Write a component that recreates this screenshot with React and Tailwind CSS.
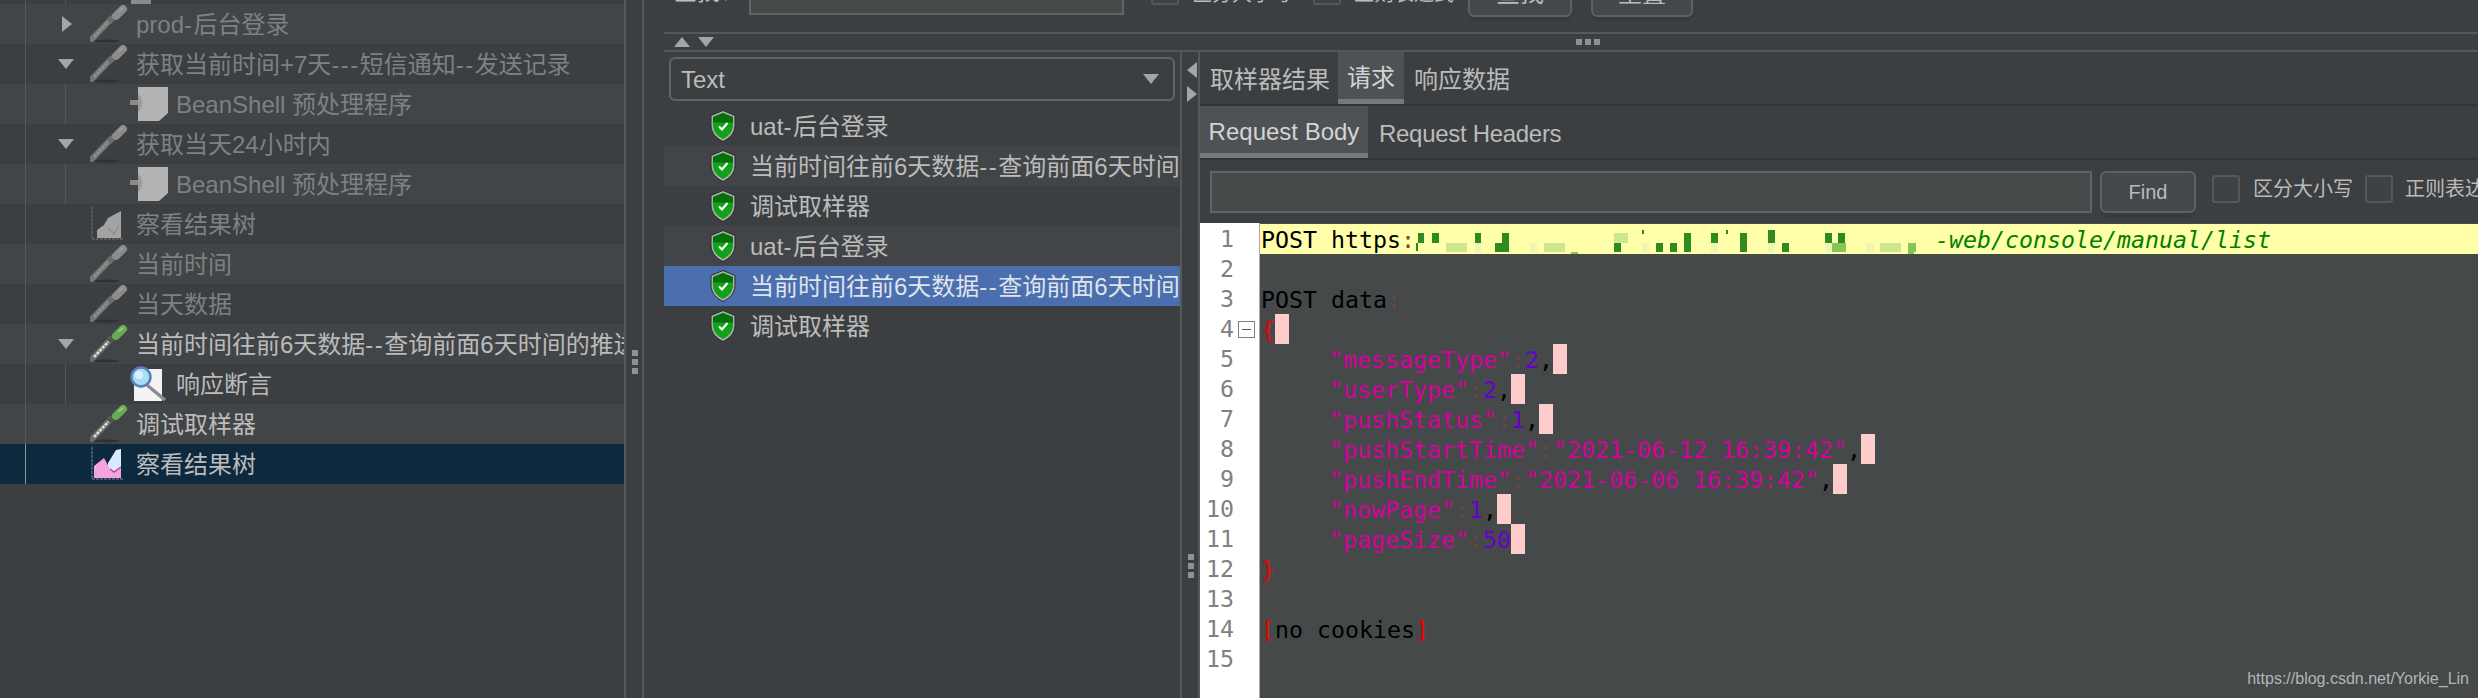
import React from "react";

// Tree rows of the JMeter test plan, top to bottom
const treeRows = [
  { text: "prod-后台登录", icon: "pipette", arrow: "right", light: true },
  { text: "获取当前时间+7天---短信通知--发送记录", icon: "pipette", arrow: "down" },
  { text: "BeanShell 预处理程序", icon: "bean", child: true, light: true },
  { text: "获取当天24小时内", icon: "pipette", arrow: "down" },
  { text: "BeanShell 预处理程序", icon: "bean", child: true, light: true },
  { text: "察看结果树", icon: "chart" },
  { text: "当前时间", icon: "pipette", light: true },
  { text: "当天数据", icon: "pipette" },
  { text: "当前时间往前6天数据--查询前面6天时间的推送记录", icon: "pipette", arrow: "down", light: true, on: true },
  { text: "响应断言", icon: "lens", child: true, on: true },
  { text: "调试取样器", icon: "pipette", light: true, on: true },
  { text: "察看结果树", icon: "chart", on: true, selected: true },
];

const results = [
  { text: "uat-后台登录" },
  { text: "当前时间往前6天数据--查询前面6天时间的推送记录", light: true },
  { text: "调试取样器" },
  { text: "uat-后台登录", light: true },
  { text: "当前时间往前6天数据--查询前面6天时间的推送记录", selected: true },
  { text: "调试取样器" },
];

// Censored part of the url, mosaic blocks: x, y, w, h, colour
const D = "#2f8a22";
const M = "#86c455";
const L = "#cfe690";
const P = "#eef5b4";
const mosaic = [
  [3, 9, 6, 10, D], [1, 19, 2, 8, D], [17, 9, 7, 10, D], [31, 19, 21, 9, L], [60, 9, 6, 10, D], [60, 19, 6, 9, P],
  [80, 19, 14, 9, D], [87, 9, 7, 10, D], [115, 19, 7, 9, P], [129, 19, 21, 9, L], [156, 28, 7, 2, M],
  [199, 9, 14, 10, L], [199, 19, 7, 9, D], [227, 6, 2, 4, D], [227, 19, 7, 9, P], [241, 19, 7, 9, D],
  [255, 19, 7, 9, D], [269, 9, 7, 19, D], [296, 9, 7, 10, D], [296, 19, 7, 9, P], [311, 6, 2, 4, D],
  [325, 9, 7, 19, D], [353, 6, 7, 13, D], [353, 19, 7, 9, P], [367, 19, 7, 9, D], [410, 9, 7, 10, D],
  [423, 9, 7, 10, D], [417, 19, 14, 9, M], [410, 19, 7, 9, P], [451, 19, 8, 9, P], [465, 19, 21, 9, L],
  [493, 19, 8, 9, M], [493, 28, 6, 2, M],
];

// Hyphens run a little wider than the Latin font gives them
const Label = ({ text }) =>
  text.split(/(-+)/).map((part, i) =>
    part.startsWith("-") ? (
      <span key={i} className="tracking-[1.5px]">{part}</span>
    ) : (
      <span key={i}>{part}</span>
    )
  );

const Pipette = ({ on }) => (
  <svg width="38" height="38" viewBox="0 0 38 38">
    <ellipse cx="16" cy="36" rx="13" ry="1.5" fill="#2f3133" />
    <path d="M2 34 L21 14" stroke={on ? "#6d6d6d" : "#767676"} strokeWidth="6" strokeLinecap="round" />
    <path d="M4 32 L20 15" stroke={on ? "#e4e4e4" : "#929292"} strokeWidth="2.5" strokeDasharray="3 1" />
    <path d="M19 17 L26 10" stroke={on ? "#4b5a46" : "#6b6b6b"} strokeWidth="6" />
    <path d="M26 11 L33 4" stroke={on ? "#6aaa55" : "#8b8b8b"} strokeWidth="8" strokeLinecap="round" />
    <path d="M29 6 L33 3" stroke={on ? "#93cc7d" : "#9b9b9b"} strokeWidth="2" strokeLinecap="round" />
  </svg>
);

const BeanIcon = () => (
  <svg width="40" height="36" viewBox="0 0 40 36">
    <path d="M8 1 H38 V27 L29 35 H8 Z" fill="#b4b4b4" />
    <path d="M0 14 H9 V19 H0 Z" fill="#8a8a8a" />
    <path d="M8 8 C14 12 14 22 8 26 Z" fill="#9c9c9c" />
  </svg>
);

const ChartIcon = ({ on }) => (
  <svg width="36" height="36" viewBox="0 0 36 36">
    <path d="M2 1 V33 H34" stroke={on ? "#5c6a78" : "#5f6163"} strokeWidth="1.5" fill="none" strokeDasharray="3 1" />
    {on ? (
      <>
        <path d="M18 17 L26 4 L31 3 V26 H18 Z" fill="#dce8fb" />
        <path d="M4 32 V20 L14 12 L20 23 L24 26 L31 21 V32 Z" fill="#f3a4e0" />
        <path d="M20 23 L24 26 L31 21" stroke="#c0409a" strokeWidth="1.5" fill="none" />
      </>
    ) : (
      <>
        <path d="M7 32 V24 L14 19 L18 12 L31 5 V32 Z" fill="#a3a3a3" />
        <path d="M18 22 L24 28 L29 20" stroke="#8e8e8e" strokeWidth="1.5" fill="none" />
      </>
    )}
  </svg>
);

const LensIcon = () => (
  <svg width="38" height="36" viewBox="0 0 38 36">
    <path d="M4 3 H32 V35 H4 Z" fill="#f3f3f3" />
    <path d="M17 19 L35 34" stroke="#8b8b8b" strokeWidth="3.5" />
    <circle cx="11" cy="11" r="9.5" fill="#a9dcf5" stroke="#5b7fb5" strokeWidth="2.5" />
    <circle cx="9" cy="9" r="4" fill="#d8f2fc" />
  </svg>
);

const Shield = () => (
  <svg width="28" height="32" viewBox="-1 -0.5 28 32">
    <path d="M13 0 L25 5 V15 C25 23 19 28 13 31 C7 28 1 23 1 15 V5 Z" fill="#aab0aa" stroke="#26282a" strokeWidth="1" />
    <path d="M13 2.5 L23 6.5 V15 C23 21.5 18 26 13 28.5 C8 26 3 21.5 3 15 V6.5 Z" fill="#12a018" />
    <path d="M13 2.5 L23 6.5 V12 H3 V6.5 Z" fill="#04700a" />
    <path d="M9 16 L12 19 L17.5 12.5" stroke="#ffffff" strokeWidth="2.2" fill="none" />
  </svg>
);

const Tri = ({ dir, className }) => {
  const points = {
    down: "0,0 16,0 8,10",
    up: "0,10 16,10 8,0",
    right: "0,0 10,8 0,16",
    left: "10,0 10,16 0,8",
  }[dir];
  const size = dir === "down" || dir === "up" ? { width: 16, height: 10 } : { width: 10, height: 16 };
  return (
    <svg {...size} className={className}>
      <polygon points={points} fill="#a3a5a6" />
    </svg>
  );
};

const TreeRow = ({ row }) => {
  const rowBg = row.selected ? "bg-[#0d293e]" : row.light ? "bg-[#424547]" : "bg-[#3c3f41]";
  const textColor = row.on ? "text-[#bbbbbb]" : "text-[#7e8082]";
  return (
    <div className={`flex h-10 items-center overflow-hidden whitespace-nowrap ${rowBg}`}>
      <span className={`ml-[25px] w-[1px] shrink-0 self-stretch ${row.selected ? "bg-[#8b9298]" : "bg-[#555759]"}`} />
      <span className="flex w-[64px] shrink-0 items-center self-stretch">
        {row.arrow === "right" && <Tri dir="right" className="ml-[36px]" />}
        {row.arrow === "down" && <Tri dir="down" className="ml-[32px]" />}
        {row.child && <span className="ml-[39px] w-[1px] self-stretch bg-[#555759]" />}
      </span>
      {row.child ? <span className="w-[40px] shrink-0" /> : null}
      <span className="flex w-[46px] shrink-0 items-center">
        {row.icon === "pipette" && <Pipette on={row.on} />}
        {row.icon === "bean" && <BeanIcon />}
        {row.icon === "chart" && <ChartIcon on={row.on} />}
        {row.icon === "lens" && <LensIcon />}
      </span>
      <span className={`pt-[2px] text-[24px] ${textColor}`}><Label text={row.text} /></span>
    </div>
  );
};

const ResultRow = ({ row }) => {
  const rowBg = row.selected ? "bg-[#4b6eaf]" : row.light ? "bg-[#424547]" : "bg-[#3c3f41]";
  return (
    <div className={`flex h-10 items-center overflow-hidden whitespace-nowrap pl-[45px] ${rowBg}`}>
      <span className="flex w-[41px] shrink-0"><Shield /></span>
      <span className={`pt-[2px] text-[24px] ${row.selected ? "text-[#dfe3ea]" : "text-[#bbbbbb]"}`}><Label text={row.text} /></span>
    </div>
  );
};

const Box = ({ className = "" }) => (
  <span className={`block h-[28px] w-[28px] shrink-0 rounded-[3px] border-2 border-[#55585a] bg-[#3f4244] ${className}`} />
);

const Btn = ({ children, className = "" }) => (
  <button className={`flex h-[42px] shrink-0 items-center justify-center rounded-[6px] border-2 border-[#5e6162] bg-[#44484a] text-[#bbbbbb] shadow-[0_4px_0_#38393b] ${className}`}>
    {children}
  </button>
);

const Grip = ({ vertical }) => (
  <div className={`flex gap-[3px] ${vertical ? "flex-col" : ""}`}>
    <span className="h-[6px] w-[6px] bg-[#8f9193]" />
    <span className="h-[6px] w-[6px] bg-[#8f9193]" />
    <span className="h-[6px] w-[6px] bg-[#8f9193]" />
  </div>
);

const Pink = () => <span className="inline-block h-[30px] w-[14px] bg-[#ffcccc] align-top" />;
const Colon = () => <span className="text-[#6e4444]">:</span>;
const Key = ({ children }) => <span className="text-[#d6009c]">{children}</span>;
const Num = ({ children }) => <span className="text-[#6600cc]">{children}</span>;
const Red = ({ children }) => <span className="text-[#ee0000]">{children}</span>;

const JsonLine = ({ name, value, isNum, last }) => (
  <div className="h-[30px] pl-[68px] text-black">
    <Key>"{name}"</Key>
    <Colon />
    {isNum ? <Num>{value}</Num> : <Key>"{value}"</Key>}
    {last ? null : ","}
    <Pink />
  </div>
);

const lineNumbers = Array.from({ length: 15 }, (_, i) => i + 1);

export default function App() {
  return (
    <div className="relative flex h-[698px] w-[2478px] overflow-hidden bg-[#3c3f41] font-['Liberation_Sans','Noto_Sans_CJK_SC',sans-serif]">
      {/* Test plan tree */}
      <div className="w-[624px] shrink-0">
        <div className="flex h-[4px]">
          <span className="ml-[25px] w-[1px] bg-[#555759]" />
          <span className="ml-[39px] w-[1px] bg-[#555759]" />
          <span className="ml-[65px] w-[20px] bg-[#8a8a8a]" />
        </div>
        {treeRows.map((row, index) => (
          <TreeRow key={index} row={row} />
        ))}
      </div>

      {/* Splitter */}
      <div className="w-[20px] shrink-0 border-x-2 border-[#555759] pl-[6px] pt-[350px]">
        <Grip vertical />
      </div>

      <div className="flex min-w-0 flex-1 flex-col pl-[20px]">
        {/* Search bar, cut off by the top of the picture */}
        <div className="flex h-[32px] shrink-0 items-start overflow-hidden whitespace-nowrap text-[#bbbbbb]">
          <span className="ml-[10px] mt-[-23px] w-[75px] shrink-0 text-[23px] leading-[30px]">查找：</span>
          <span className="mt-[-27px] block h-[42px] w-[375px] shrink-0 border-2 border-[#646464] bg-[#45494a]" />
          <Box className="ml-[27px] mt-[-23px]" />
          <span className="ml-[13px] mt-[-21px] w-[121px] shrink-0 text-[20px] leading-[30px]">区分大小写</span>
          <Box className="mt-[-23px]" />
          <span className="ml-[13px] mt-[-21px] w-[114px] shrink-0 text-[20px] leading-[30px]">正则表达式</span>
          <Btn className="mt-[-25px] w-[104px] pb-[4px] text-[24px]">查找</Btn>
          <Btn className="ml-[19px] mt-[-25px] w-[102px] pb-[4px] text-[24px]">重置</Btn>
        </div>

        <div className="flex h-[20px] shrink-0 items-center border-y-2 border-[#555759] pl-[10px]">
          <Tri dir="up" />
          <Tri dir="down" className="ml-[8px]" />
          <div className="ml-[862px]"><Grip /></div>
        </div>

        <div className="flex min-h-0 flex-1">
          {/* Sampler results list */}
          <div className="w-[516px] shrink-0">
            <div className="mx-[5px] my-[5px] flex h-[44px] items-center justify-between rounded-[6px] border-2 border-[#646464] pl-[10px] pr-[14px]">
              <span className="pt-[2px] text-[24px] text-[#bbbbbb]">Text</span>
              <Tri dir="down" />
            </div>
            {results.map((row, index) => (
              <ResultRow key={index} row={row} />
            ))}
          </div>

          <div className="flex w-[20px] shrink-0 flex-col border-x-2 border-[#555759] pl-[5px] pt-[10px]">
            <Tri dir="left" />
            <Tri dir="right" className="mt-[8px]" />
            <div className="mt-[452px] pl-[1px]"><Grip vertical /></div>
          </div>

          {/* Result details */}
          <div className="flex min-w-0 flex-1 flex-col">
            <div className="flex h-[54px] shrink-0 items-stretch border-b-2 border-[#323436] text-[24px] text-[#bbbbbb]">
              <span className="flex items-center pl-[10px] pr-[8px] pt-[3px]">取样器结果</span>
              <span className="flex items-center border-b-[5px] border-[#747a80] bg-[#4e5254] px-[9px] pt-[5px] text-[#d4d4d4]">请求</span>
              <span className="flex items-center px-[10px] pt-[3px]">响应数据</span>
            </div>
            <div className="flex h-[54px] shrink-0 items-stretch border-b-2 border-[#323436] text-[24px] text-[#bbbbbb]">
              <span className="flex w-[168px] items-center justify-center border-b-[5px] border-[#747a80] bg-[#4e5254] pt-[5px] text-[#d4d4d4]">Request Body</span>
              <span className="flex items-center px-[11px] pt-[3px] tracking-[-0.3px]">Request Headers</span>
            </div>

            <div className="flex h-[63px] shrink-0 items-center overflow-hidden whitespace-nowrap pl-[10px] text-[#bbbbbb]">
              <span className="block h-[42px] w-[882px] shrink-0 border-2 border-[#646464] bg-[#45494a]" />
              <Btn className="ml-[8px] w-[96px] text-[20px]">Find</Btn>
              <Box className="ml-[16px] mb-[6px]" />
              <span className="ml-[13px] mb-[6px] w-[99px] shrink-0 text-[20px]">区分大小写</span>
              <Box className="ml-[13px] mb-[6px]" />
              <span className="ml-[12px] mb-[6px] shrink-0 text-[20px]">正则表达式</span>
            </div>

            {/* Request text */}
            <div className="flex min-h-0 flex-1 font-['DejaVu_Sans_Mono','Liberation_Mono',monospace] text-[23.25px] leading-[32px]">
              <div className="w-[60px] shrink-0 border-r border-[#a8a8a8] bg-white pt-[1px] text-[#808080]">
                {lineNumbers.map((n) => (
                  <div key={n} className="flex h-[30px] items-center">
                    <span className="w-[34px] text-right">{n}</span>
                    {n === 4 && (
                      <span className="ml-[4px] flex h-[17px] w-[17px] items-center justify-center border border-[#808080]">
                        <span className="h-[1px] w-[9px] bg-[#555555]" />
                      </span>
                    )}
                  </div>
                ))}
              </div>
              <div className="min-w-0 flex-1 whitespace-pre bg-[#45494a] pt-[1px] text-black">
                <div className="flex h-[30px] bg-[#ffffaa] pl-[1px]">
                  <span>POST https<Colon /></span>
                  <svg width="520" height="30" viewBox="0 0 520 30" className="shrink-0">
                    {mosaic.map(([x, y, w, h, c], i) => (
                      <rect key={i} x={x} y={y} width={w} height={h} fill={c} />
                    ))}
                  </svg>
                  <span className="italic text-[#008000]">-web/console/manual/list</span>
                </div>
                <div className="h-[30px]" />
                <div className="h-[30px] pl-[1px]">POST data<Colon /></div>
                <div className="h-[30px] pl-[1px]"><Red>{"{"}</Red><Pink /></div>
                <div className="pl-[1px]">
                  <JsonLine name="messageType" value="2" isNum />
                  <JsonLine name="userType" value="2" isNum />
                  <JsonLine name="pushStatus" value="1" isNum />
                  <JsonLine name="pushStartTime" value="2021-06-12 16:39:42" />
                  <JsonLine name="pushEndTime" value="2021-06-06 16:39:42" />
                  <JsonLine name="nowPage" value="1" isNum />
                  <JsonLine name="pageSize" value="50" isNum last />
                </div>
                <div className="h-[30px] pl-[1px]"><Red>{"}"}</Red></div>
                <div className="h-[30px]" />
                <div className="h-[30px] pl-[1px]"><Red>[</Red>no cookies<Red>]</Red></div>
              </div>
            </div>
          </div>
        </div>
      </div>

      {/* Blog watermark over the editor */}
      <span className="absolute bottom-[7px] right-[9px] text-[16px] text-[#b4b6b6]">https://blog.csdn.net/Yorkie_Lin</span>
    </div>
  );
}
